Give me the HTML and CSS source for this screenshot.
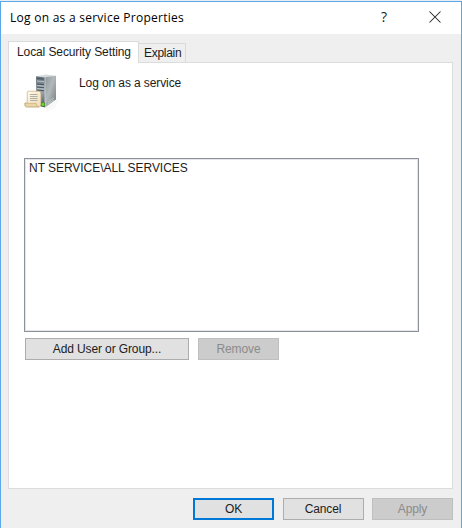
FILE: index.html
```html
<!DOCTYPE html>
<html lang="en">
<head>
<meta charset="utf-8">
<title>Log on as a service Properties</title>
<link rel="stylesheet" href="styles.css">
</head>
<body>
<div class="window">
  <header class="titlebar">
    <span class="title">Log on as a service Properties</span>
    <span class="help">?</span>
    <svg class="close" width="12" height="12" viewBox="0 0 12 12"><path d="M.5.5l11 11M11.5.5l-11 11" stroke="#222" stroke-width="1.05" fill="none"/></svg>
  </header>
  <nav class="tabs">
    <div class="tab active">Local Security Setting</div>
    <div class="tab">Explain</div>
  </nav>
  <main class="page">
    <div class="policy">
      <svg class="icon" width="36" height="38" viewBox="0 0 36 38">
        <defs>
          <linearGradient id="side" x1="0" y1="0" x2="1" y2="1"><stop offset="0" stop-color="#8d9699"/><stop offset=".45" stop-color="#b2b9bb"/><stop offset="1" stop-color="#6f787a"/></linearGradient>
          <linearGradient id="front" x1="0" y1="0" x2="0" y2="1"><stop offset="0" stop-color="#66727b"/><stop offset=".5" stop-color="#98a2a9"/><stop offset="1" stop-color="#4d585c"/></linearGradient>
          <linearGradient id="paper" x1="0" y1="0" x2="1" y2="1"><stop offset="0" stop-color="#fffdf1"/><stop offset="1" stop-color="#efdcb6"/></linearGradient>
        </defs>
        <path d="M21 33l14-8-4 9-8 3z" fill="#f8f8f7"/>
        <path d="M12 2.2L22 .5l10 1.2-11 2z" fill="#d5dbdc"/>
        <path d="M12 2.2l9 1.2v30l-9-2.5z" fill="url(#front)"/>
        <path d="M21 3.3l11-1.6v23.8L21 33.4z" fill="url(#side)"/>
        <path d="M21 3.3v30" stroke="#d1d7d8" stroke-width=".8"/>
        <path d="M13 4.5l7 .6M13 10l7 .7M13 13l7 .7M13 16l7 .7" stroke="#46535c" stroke-width="1"/>
        <path d="M13 7l7 .6M13 11.5l7 .7M13 14.5l7 .7" stroke="#c3ccd2" stroke-width=".9"/>
        <path d="M24 28l6-4M24 30l6-4" stroke="#c9cfcf" stroke-width=".8"/>
        <path d="M17 28l4 1v4l-4-1z" fill="#477e2c"/>
        <circle cx="19" cy="30.500" r="1.4" fill="#67e52e"/>
        <path d="M4.5 17.2Q3 17.3 3.2 19v10H.8Q.2 33 2.5 33h12.2q2.2 0 2.2-3V20q0-3-2.2-2.8z" fill="url(#paper)" stroke="#c9ad7d" stroke-width=".7"/>
        <path d="M1 29.3h11.2q0 3.2 2.5 3.5H2.7Q1 32.6 1 29.3z" fill="#ead5a6" stroke="#c0a26e" stroke-width=".6"/>
        <path d="M6 20.5h7.5M6 22.5h7.5M6 24.5h7.5M6 26.5h7.5" stroke="#a8a59e" stroke-width=".9"/>
      </svg>
      <span class="policy-name">Log on as a service</span>
    </div>
    <div class="list">NT SERVICE\ALL SERVICES</div>
    <div class="actions">
      <button class="btn add">Add User or Group...</button>
      <button class="btn remove" disabled>Remove</button>
    </div>
  </main>
  <footer class="footer">
    <button class="btn ok">OK</button>
    <button class="btn cancel">Cancel</button>
    <button class="btn apply" disabled>Apply</button>
  </footer>
</div>
</body>
</html>
```
FILE: styles.css
```css
* { box-sizing: border-box; }
body {
  margin: 0;
  height: 528px;
  padding-top: 1px;
  overflow: hidden;
  background: #e9eef2;
  color: #1c1c1c;
  font: 12px/16px "Liberation Sans", Arial, sans-serif;
  letter-spacing: -0.1px;
}
.window {
  height: 527px;
  background: #efefef;
  border: 1px solid #5ba8e8;
  border-bottom: 0;
}
.titlebar {
  display: flex;
  height: 32px;
  padding-left: 9px;
  background: #fff;
}
.title {
  width: 371px;
  padding-top: 8px;
  font: 12px/16px "Open Sans", sans-serif;
  letter-spacing: 0.26px;
  white-space: nowrap;
  color: #000;
}
.help {
  width: 48px;
  padding-top: 7px;
  font: 14px/16px "Open Sans", sans-serif;
}
.close { margin-top: 9px; }
.tabs {
  display: flex;
  align-items: flex-end;
  height: 28px;
  padding-left: 7px;
}
.tab {
  width: 47px;
  height: 19px;
  padding: 1px 0 0 5px;
  border: 1px solid #dadada;
  border-width: 1px 1px 0 0;
  letter-spacing: -0.3px;
  white-space: nowrap;
}
.tab.active {
  position: relative;
  width: 131px;
  height: 22px;
  margin-bottom: -1px;
  padding: 2px 0 0 8px;
  border-left-width: 1px;
  background: #fff;
  letter-spacing: -0.1px;
}
.page {
  width: 445px;
  height: 427px;
  margin-left: 7px;
  padding: 11px 0 0 15px;
  border: 1px solid #dcdcdc;
  background: #fff;
}
.policy { display: flex; height: 84px; }
.icon { flex: none; margin-right: 19px; }
.policy-name { padding-top: 1px; }
.list {
  width: 395px;
  height: 174px;
  padding: 1px 4px;
  border: 1px solid #8d929a;
  box-shadow: inset 0 0 0 1px #e4e5e8;
  letter-spacing: -0.04px;
}
.actions {
  display: flex;
  gap: 9px;
  padding: 6px 0 0 1px;
}
.footer {
  display: flex;
  gap: 8.5px;
  padding: 9px 0 0 192px;
}
.btn {
  width: 81px;
  height: 22px;
  padding: 0;
  border: 1px solid #adadad;
  background: #e1e1e1;
  color: #1c1c1c;
  font: inherit;
  letter-spacing: -0.12px;
  line-height: 20px;
  white-space: nowrap;
}
.btn:disabled {
  border-color: #bfbfbf;
  background: #cccccc;
  color: #8b8b8b;
}
.add { width: 164px; }
.ok {
  border: 2px solid #0078d7;
  line-height: 18px;
}
```
